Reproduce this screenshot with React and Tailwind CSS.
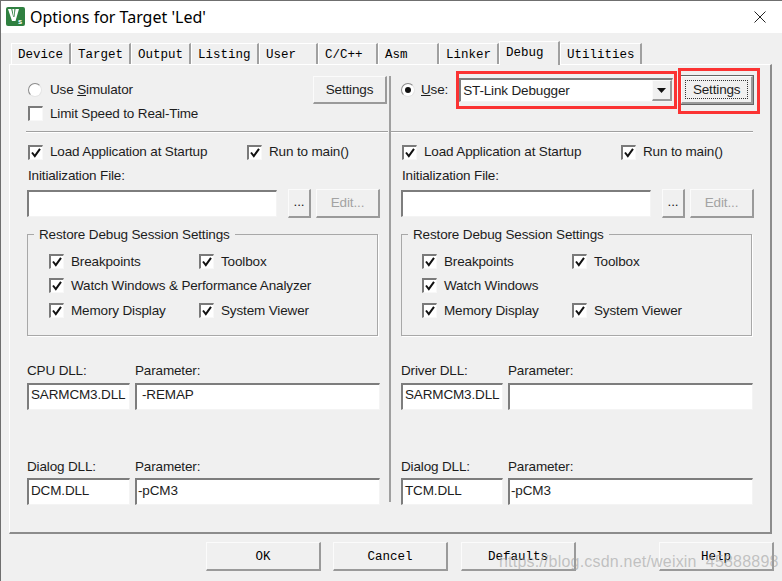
const SANS = "font-['Liberation_Sans',Arial,sans-serif]";
const MONO = "font-['Liberation_Mono',monospace]";

function Check({ on = true }) {
  return (
    <span className="relative block w-[15px] h-[15px] shrink-0 bg-white border-t-2 border-l-2 border-t-[#7a7a7a] border-l-[#7a7a7a] border-r border-b border-r-[#f8f8f8] border-b-[#f8f8f8]">
      {on && (
        <svg className="absolute left-0 top-0" width="12" height="12" viewBox="0 0 12 12">
          <path d="M2 5.5 L4.8 9 L10 1.8" fill="none" stroke="#111" strokeWidth="2" />
        </svg>
      )}
    </span>
  );
}

function CheckRow({ label, on, className = '' }) {
  return (
    <div className={`flex items-center gap-[7px] whitespace-nowrap ${className}`}>
      <Check on={on} />
      <span>{label}</span>
    </div>
  );
}

function Radio({ on }) {
  return (
    <span className="flex items-center justify-center w-[14px] h-[14px] shrink-0 rounded-full bg-white border border-[#8a8a8a] border-r-[#e4e4e4] border-b-[#e4e4e4]">
      {on && <span className="block w-[6px] h-[6px] rounded-full bg-[#111]" />}
    </span>
  );
}

function Sunken({ className = '', children }) {
  return (
    <div className={`flex items-center bg-white border-t-2 border-l-2 border-t-[#7d7d7d] border-l-[#7d7d7d] border-r border-b border-r-[#f4f4f4] border-b-[#f4f4f4] whitespace-nowrap overflow-hidden ${className}`}>
      {children}
    </div>
  );
}

function Btn({ className = '', children }) {
  return (
    <div className={`flex items-center justify-center bg-[#f0f0f0] border-t border-l border-t-[#fbfbfb] border-l-[#fbfbfb] border-r-2 border-b-2 border-r-[#9a9a9a] border-b-[#9a9a9a] whitespace-nowrap ${className}`}>
      {children}
    </div>
  );
}

function Hr({ className = '' }) {
  return <div className={`h-[2px] border-t border-t-[#a0a0a0] border-b border-b-white ${className}`} />;
}

function SessionGroup({ watchLabel, padClass }) {
  return (
    <div className={`relative w-[351px] h-[102px] mt-[16px] border border-[#a8a8a8] pt-[14px] shadow-[1px_1px_0_#fff] ${padClass}`}>
      <span className="absolute left-[6px] -top-[7px] px-[5px] bg-[#f0f0f0] whitespace-nowrap">
        Restore Debug Session Settings
      </span>
      <div className="flex items-center h-[24.5px]">
        <CheckRow label="Breakpoints" className="w-[150px]" />
        <CheckRow label="Toolbox" />
      </div>
      <div className="flex items-center h-[24.5px]">
        <CheckRow label={watchLabel} />
      </div>
      <div className="flex items-center h-[24.5px]">
        <CheckRow label="Memory Display" className="w-[150px]" />
        <CheckRow label="System Viewer" />
      </div>
    </div>
  );
}

function DllRow({ dllLabel, dll, param, rowClass, labelClass, dllClass, textClass, paramClass }) {
  return (
    <div className={rowClass}>
      <div className="flex h-[16px] items-center whitespace-nowrap">
        <span className={labelClass}>{dllLabel}</span>
        <span>Parameter:</span>
      </div>
      <div className="flex gap-[5px]">
        <Sunken className={`h-[27px] pl-[2px] ${dllClass} ${textClass}`}>{dll}</Sunken>
        <Sunken className={`w-[245px] h-[27px] ${paramClass} ${textClass}`}>{param}</Sunken>
      </div>
    </div>
  );
}

function MiddleBlock({ watchLabel, padClass }) {
  return (
    <>
      <div className="flex items-center h-[20px] mt-[9px]">
        <CheckRow label="Load Application at Startup" className="w-[220px] pl-[1px]" />
        <CheckRow label="Run to main()" />
      </div>
      <div className="h-[16px] mt-[6px] flex items-center pl-[1px]">Initialization File:</div>
      <div className="flex mt-[6px]">
        <Sunken className="w-[250px] h-[27px]" />
        <Btn className="w-[23px] h-[29px] -mt-[1px] ml-[11px] pb-[2px]">...</Btn>
        <Btn className="w-[64px] h-[29px] -mt-[1px] ml-[5px] text-[#a3a3a3]">Edit...</Btn>
      </div>
      <SessionGroup watchLabel={watchLabel} padClass={padClass} />
    </>
  );
}

function LeftColumn() {
  return (
    <div className="w-[381px] h-[426px] shrink-0 pl-[17px] border-r-2 border-r-[#a0a0a0]">
      <div className="h-[55px]">
        <div className="flex items-center h-[28px] pr-[2px]">
          <span className="ml-[1px] mr-[8px]"><Radio /></span>
          <span>
            Use <span className="underline">S</span>imulator
          </span>
          <Btn className="w-[74px] h-[28px] ml-auto">Settings</Btn>
        </div>
        <CheckRow label="Limit Speed to Real-Time" on={false} className="h-[19px] pl-[1px]" />
      </div>
      <Hr className="w-[362px] -ml-[1px]" />
      <MiddleBlock watchLabel="Watch Windows & Performance Analyzer" padClass="pl-[21px]" />
      <DllRow
        dllLabel="CPU DLL:"
        dll="SARMCM3.DLL"
        param="-REMAP"
        rowClass="mt-[27px] flex flex-col gap-[4px]"
        labelClass="w-[108px]"
        dllClass="w-[103px]"
        textClass="pb-[4px]"
        paramClass="pl-[5px]"
      />
      <DllRow
        dllLabel="Dialog DLL:"
        dll="DCM.DLL"
        param="-pCM3"
        rowClass="mt-[49px] flex flex-col gap-[3px]"
        labelClass="w-[108px]"
        dllClass="w-[103px]"
        textClass="pb-[3px]"
        paramClass="pl-[1px]"
      />
    </div>
  );
}

function RightColumn() {
  return (
    <div className="flex-1 pl-[10px]">
      <div className="h-[55px]">
        <div className="flex items-center h-[28px]">
          <Radio on />
          <span className="ml-[6px]">
            <span className="underline">U</span>se:
          </span>
          <Sunken className="w-[214px] h-[24px] ml-[11px] pl-[2px]">
            <span className="flex-1">ST-Link Debugger</span>
            <Btn className="w-[20px] h-[21px] leading-none">
              <svg width="9" height="5" viewBox="0 0 9 5"><path d="M0 0H9L4.5 5Z" fill="#111" /></svg>
            </Btn>
          </Sunken>
          <div className="w-[74px] h-[30px] -my-[1px] ml-[7px] border border-[#646464] shrink-0">
            <Btn className="relative w-full h-full">
              <span className="absolute inset-[3px] border border-dotted border-[#333]" />
              Settings
            </Btn>
          </div>
        </div>
      </div>
      <Hr className="w-[362px] -ml-[10px]" />
      <MiddleBlock watchLabel="Watch Windows" padClass="pl-[20px]" />
      <DllRow
        dllLabel="Driver DLL:"
        dll="SARMCM3.DLL"
        param=""
        rowClass="mt-[27px] flex flex-col gap-[4px]"
        labelClass="w-[107px]"
        dllClass="w-[102px]"
        textClass="pb-[4px]"
        paramClass="pl-[5px]"
      />
      <DllRow
        dllLabel="Dialog DLL:"
        dll="TCM.DLL"
        param="-pCM3"
        rowClass="mt-[49px] flex flex-col gap-[3px]"
        labelClass="w-[107px]"
        dllClass="w-[102px]"
        textClass="pb-[3px]"
        paramClass="pl-[1px]"
      />
    </div>
  );
}

const TABS = [
  ['Device', 60],
  ['Target', 60],
  ['Output', 60],
  ['Listing', 68],
  ['User', 59],
  ['C/C++', 60],
  ['Asm', 61],
  ['Linker', 60],
  ['Debug', 61],
  ['Utilities', 82],
];

function TabBar() {
  return (
    <div className={`flex items-end h-[24px] ml-[10px] text-[12.5px] tracking-normal text-black ${MONO}`}>
      {TABS.map(([name, w]) => {
        const active = name === 'Debug';
        return (
          <div
            key={name}
            style={{ width: w }}
            className={
              active
                ? 'relative z-10 h-[24px] -mb-[1px] pl-[6px] pt-[5px] bg-[#f0f0f0] border-t border-l border-t-white border-l-white border-r-2 border-r-[#a0a0a0]'
                : 'h-[21px] pl-[6px] pt-[5px] bg-[#f0f0f0] border-t border-l border-t-white border-l-white border-r-2 border-r-[#a0a0a0]'
            }
          >
            {name}
          </div>
        );
      })}
    </div>
  );
}

function Logo() {
  return (
    <svg width="19" height="19" viewBox="0 0 19 19" className="shrink-0">
      <rect width="19" height="19" rx="2" fill="#2f8040" />
      <path d="M2 2H13L9.5 14H6Z" fill="#fff" />
      <path d="M5.2 2H6.3L7.8 10H7.2ZM8.4 2H9.5L8.4 10H7.9Z" fill="#2f8040" />
      <text x="12" y="17" fontSize="7.5" fontWeight="700" fill="#fff" fontFamily="Liberation Sans, sans-serif">s</text>
    </svg>
  );
}

export default function App() {
  return (
    <div className={`relative w-[782px] h-[581px] overflow-hidden bg-[#f0f0f0] border-t border-l border-t-[#6f6f6f] border-l-[#6f6f6f] text-[13.5px] leading-none tracking-[-0.15px] text-[#1c1c1c] ${SANS}`}>
      <div className="flex items-center h-[32px] bg-white pl-[5px] gap-[5px] pb-[1px]">
        <Logo />
        <span className="font-['Noto_Sans',sans-serif] text-[16px] tracking-normal text-black">Options for Target 'Led'</span>
        <svg className="ml-auto mr-[16px]" width="12" height="12" viewBox="0 0 12 12">
          <path d="M0.5 0.5L11.5 11.5M11.5 0.5L0.5 11.5" stroke="#222" strokeWidth="1" />
        </svg>
      </div>
      <div className="pt-[7px]">
        <TabBar />
        <div className="flex items-start pt-[11px] w-[763px] h-[470px] ml-[8px] border-t border-l border-t-white border-l-white border-r-2 border-b-2 border-r-[#8c8c8c] border-b-[#8c8c8c]">
          <LeftColumn />
          <RightColumn />
        </div>
      </div>
      <div className={`flex mt-[8px] text-[12.5px] tracking-normal text-black ${MONO}`}>
        <Btn className="w-[115px] h-[29px] ml-[205px] pt-[3px]">OK</Btn>
        <Btn className="w-[115px] h-[29px] ml-[12px] pt-[3px]">Cancel</Btn>
        <Btn className="w-[115px] h-[29px] ml-[13px] pt-[3px]">Defaults</Btn>
        <Btn className="w-[115px] h-[29px] ml-[83px] pt-[3px]">Help</Btn>
      </div>

      {/* annotation boxes and watermark sit on top of the dialog */}
      <div className="absolute left-[455px] top-[70px] w-[221px] h-[38px] border-[3px] border-[#fb3333]" />
      <div className="absolute left-[677px] top-[67px] w-[82px] h-[46px] border-[3px] border-[#fb3333]" />
      <div className="absolute left-[498px] top-[553px] text-[16px] whitespace-nowrap tracking-[0.2px] text-[#a0a0a0]/60">
        https://blog.csdn.net/weixin_45888898
      </div>
    </div>
  );
}
